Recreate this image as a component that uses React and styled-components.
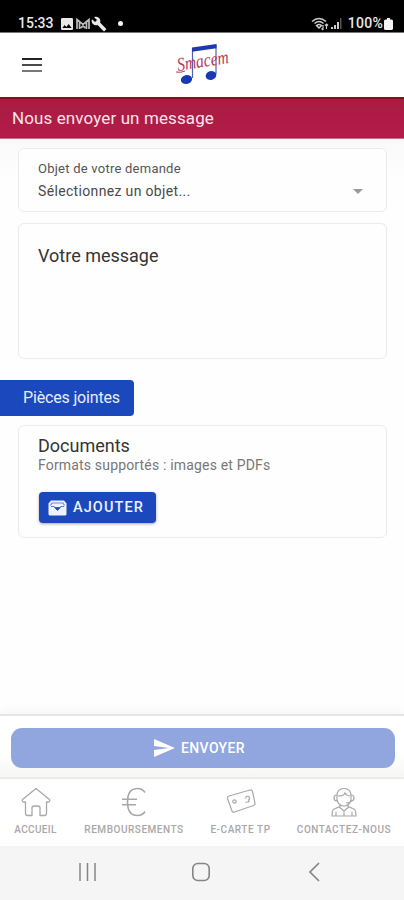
import React from 'react';
import styled, {createGlobalStyle} from 'styled-components';
import {MdImage, MdBuild, MdSend, MdArrowDropDown} from 'react-icons/md';

const GlobalStyle = createGlobalStyle`
  * {
    box-sizing: border-box;
  }
  body {
    margin: 0;
    background: #fff;
    font-family: Roboto, 'Liberation Sans', sans-serif;
  }
`;

const Screen = styled.div`
  width: 404px;
  height: 900px;
  display: flex;
  flex-direction: column;
  overflow: hidden;
  background: #fefefe;
`;

const StatusBar = styled.div`
  height: 33px;
  flex: none;
  display: flex;
  justify-content: space-between;
  padding: 15px 11px 0 18px;
  background: #000;
  border-bottom: 1px solid #777;
  color: #e8e8e8;
`;

const StatusGroup = styled.div`
  height: 17px;
  display: flex;
  align-items: center;
  svg {
    flex: none;
  }
`;

const StatusText = styled.span`
  font-size: 14px;
  font-weight: 500;
  line-height: 17px;
  letter-spacing: ${props => props.$spacing || 0}px;
  margin-left: ${props => props.$before || 0}px;
  margin-right: ${props => props.$after || 0}px;
`;

const StatusDot = styled.span`
  width: 5px;
  height: 5px;
  margin-left: 11px;
  border-radius: 50%;
  background: #f4f4f4;
`;

const Header = styled.header`
  height: 64px;
  flex: none;
  display: grid;
  grid-template-columns: 1fr 60px 1fr;
  align-items: center;
  padding: 0 22px;
  background: #fff;
`;

const MenuButton = styled.button`
  width: 20px;
  height: 14px;
  padding: 0;
  border: 0;
  background: none;
  display: flex;
  flex-direction: column;
  justify-content: space-between;
`;

const MenuLine = styled.span`
  width: 20px;
  height: 2px;
  background: ${props => props.$color};
`;

const TitleBar = styled.h1`
  height: 42px;
  flex: none;
  margin: 0;
  padding-left: 12px;
  border-top: 2px solid #85101c;
  border-bottom: 1px solid #cf6c89;
  background: linear-gradient(#a81c40, #b51b4a);
  color: #fbe3ea;
  font-size: 17px;
  font-weight: 400;
  line-height: 38px;
  letter-spacing: 0.11px;
`;

const Content = styled.main`
  flex: 1;
  padding: 9px 17px 0 18px;
  background: linear-gradient(#f9f9f9, #fefefe 40px);
`;

const Card = styled.section`
  height: ${props => props.$height}px;
  margin-bottom: ${props => props.$gap || 0}px;
  padding: ${props => props.$top}px 16px 0 19px;
  border: 1px solid #ebebeb;
  border-radius: 6px;
  background: #fefefe;
`;

const FieldLabel = styled.div`
  color: #555;
  font-size: 13px;
  line-height: 18px;
  letter-spacing: 0.24px;
`;

const SelectRow = styled.div`
  height: 26px;
  display: flex;
  align-items: center;
  justify-content: space-between;
  color: #4a4a4a;
  font-size: 14px;
  letter-spacing: 0.34px;
  svg {
    color: #999;
  }
`;

const CardTitle = styled.div`
  color: #343434;
  font-size: 18px;
  line-height: 21px;
`;

const Hint = styled.div`
  color: #777;
  font-size: 14px;
  line-height: 18px;
  letter-spacing: 0.17px;
`;

const SectionTag = styled.h2`
  width: 134px;
  height: 36px;
  margin: 0 0 9px -18px;
  padding-left: 23px;
  border-radius: 0 4px 4px 0;
  background: #1b49bd;
  color: #e8edfb;
  font-size: 16px;
  font-weight: 400;
  line-height: 36px;
  letter-spacing: -0.16px;
`;

const AddButton = styled.button`
  width: 117px;
  height: 31px;
  margin: 18px 0 0 1px;
  padding: 0 0 0 9px;
  display: flex;
  align-items: center;
  gap: 6px;
  border: 0;
  border-radius: 4px;
  background: #1b49bd;
  box-shadow: 0 1px 3px rgba(0, 0, 0, 0.35);
  color: #eef2fd;
  font-family: inherit;
  font-size: 14.5px;
  font-weight: 500;
  letter-spacing: 1.1px;
`;

const ActionBar = styled.div`
  height: 65px;
  flex: none;
  padding: 12px 9px 0 11px;
  border-top: 2px solid #e4e5e5;
  border-bottom: 2px solid #ececec;
  background: linear-gradient(#fff 60%, #f6f6f4);
  box-shadow: 0 -3px 10px rgba(0, 0, 0, 0.04);
`;

const SendButton = styled.button`
  width: 100%;
  height: 40px;
  padding: 0 9px 0 0;
  display: flex;
  align-items: center;
  justify-content: center;
  gap: 5px;
  border: 0;
  border-radius: 11px;
  background: #91a5df;
  color: #fff;
  font-family: inherit;
  font-size: 14px;
  font-weight: 500;
  letter-spacing: 0.35px;
`;

const TabBar = styled.nav`
  height: 67px;
  flex: none;
  display: flex;
  background: #fff;
`;

const Tab = styled.a`
  width: ${props => props.$width}px;
  flex: none;
  padding-top: 8px;
  display: flex;
  flex-direction: column;
  align-items: center;
  color: #a8a8a8;
  svg {
    display: block;
  }
`;

const TabLabel = styled.span`
  margin-top: 7px;
  font-size: 10px;
  font-weight: 500;
  line-height: 12px;
  white-space: nowrap;
  letter-spacing: ${props => props.$spacing}px;
`;

const SystemNav = styled.div`
  height: 54px;
  flex: none;
  display: grid;
  grid-template-columns: 114px 118px 12px;
  align-items: center;
  padding: 0 0 2px 77px;
  background: #f5f5f5;
`;

const GmailIcon = () => (
  <svg width="16" height="12" viewBox="0 0 15 12" fill="none" stroke="#bbb" strokeWidth="1.7">
    <path d="M1.5 11V1.5l6 5 6-5V11M4 11V4M11 11V4M5 10l2.5-2L10 10" />
  </svg>
);

const WifiIcon = () => (
  <svg width="18" height="14" viewBox="0 0 18 14" fill="none" stroke="#ccc" strokeWidth="1.5">
    <path d="M1 4.5Q8 -1.5 15 4.5M3.5 6.5Q8 2.5 12.5 6.5M5.5 8.5Q8 6.5 10.5 8.5L8 11z" />
    <path d="M12 8v5M10.5 11.5 12 13M15.5 12V7M14 8.5 15.5 7 17 8.5" strokeWidth="1.2" />
  </svg>
);

const SignalIcon = () => (
  <svg width="14" height="11" viewBox="-2 0 14 11">
    <path d="M0 11V9h2v2zM3 11V7h2v4zM6 11V4h2v7z" fill="#ccc" />
    <path d="M9 11V0h1.5v11z" fill="#555" />
  </svg>
);

const BatteryIcon = () => (
  <svg width="9" height="12" viewBox="0 0 9 12" fill="#f4f4f4">
    <path d="M3 0h3v1.5h1.5Q9 1.5 9 3v7.5Q9 12 7.5 12h-6Q0 12 0 10.5V3Q0 1.5 1.5 1.5H3z" />
  </svg>
);

const Logo = () => (
  <svg width="60" height="48" viewBox="0 0 60 48" overflow="visible">
    <path d="M20.5 37V7M44 33V4" stroke="#5361b6" strokeWidth="1.2" />
    <path d="M20 6.5 44.5 3v4.2L20 10.7z" fill="#1c39b0" />
    <text
      x="6"
      y="30"
      transform="rotate(-9 6 30)"
      textLength="52"
      lengthAdjust="spacingAndGlyphs"
      fontFamily="Liberation Serif, serif"
      fontStyle="italic"
      fontSize="19"
      fill="#b43a5b"
    >
      Smacem
    </text>
    <path d="M4 31q5 1 9-1" stroke="#b43a5b" fill="none" />
    <ellipse cx="14.5" cy="38.5" rx="5.7" ry="4.5" transform="rotate(-15 14.5 38.5)" fill="#1838b4" />
    <ellipse cx="39" cy="34.5" rx="5.4" ry="4.3" transform="rotate(-15 39 34.5)" fill="#1838b4" />
  </svg>
);

const InboxIcon = () => (
  <svg width="19" height="16" viewBox="0 0 19 16">
    <path
      d="M3 .5h13l2.5 3v10.500q0 1.500-1.500 1.500H2Q.5 15.500.5 14V3.500z"
      fill="#eef2fd"
    />
    <path d="M2.500 5.500 4 3h11l1.500 2.500" fill="none" stroke="#6d8bd8" strokeWidth="1.2" />
    <path d="M3 6.500h3.500M12.500 6.500H16M9.500 10.500 6.500 7.500h6z" fill="#1b49bd" stroke="#1b49bd" strokeWidth=".7" />
  </svg>
);

const HomeIcon = () => (
  <svg width="30" height="30" viewBox="0 0 30 30" fill="none" stroke="currentColor" strokeWidth="1.3" strokeLinejoin="round">
    <path d="M15 1.5 1.5 12.5q-1 2 1 2.5H4.5v11q0 2.5 2 2.5H11V21q0-2 2-2h4q2 0 2 2v7.500h4.500q2 0 2-2.500V15h2q2-.5 1-2.500z" />
  </svg>
);

const EuroIcon = () => (
  <svg width="30" height="30" viewBox="0 0 30 30" fill="none" stroke="currentColor" strokeWidth="1.6">
    <path d="M26 5.5Q23.5 1.5 18.5 1.5 8.5 1.5 8.5 15T18.5 28.5q5 0 7.5-4M3 12.2h15M3 17.8h14" />
  </svg>
);

const CardIcon = () => (
  <svg width="30" height="30" viewBox="0 0 30 30" fill="none" stroke="currentColor" strokeWidth="1.2">
    <path d="M3 9 24 3q2-.5 2.5 1.500L29 16q.3 2-1.500 2.500L8.500 25Q6.500 26 6 24L1.500 11.500Q1 9.500 3 9z" />
    <circle cx="8.5" cy="14.5" r="1.7" />
    <path d="M19.5 11.5q.5-3 3-2 2 1.500 0 3.500 1.500 1-.5 2l-2.500.5" />
  </svg>
);

const AgentIcon = () => (
  <svg width="30" height="30" viewBox="0 0 30 30" fill="none" stroke="currentColor" strokeWidth="1.2">
    <path d="M8 9Q8 1.500 15 1.500T22 9M8 8q-3 0-3 3t3 3M22 8q3 0 3 3t-3 3M8 8v5q1.500 6 7 6t7-6V8M9 9q6 0 7-3 2 3 5 3M23 13q-1 3-6 3" />
    <path d="M11 17v2.500L5 22q-2 1-2 7h24q0-6-2-7l-6-2.500V17M10 20l5 4 5-4M15 24v5M7 25v4M23 25v4" />
  </svg>
);

const RecentsIcon = () => (
  <svg width="20" height="18" viewBox="0 0 20 18" stroke="#858585" strokeWidth="1.5">
    <path d="M3 0v18M10.5 0v18M18 0v18" />
  </svg>
);

const HomeKeyIcon = () => (
  <svg width="20" height="20" viewBox="0 0 20 20" fill="none" stroke="#858585" strokeWidth="1.6">
    <rect x="1.8" y="1.5" width="16.4" height="17" rx="5" />
  </svg>
);

const BackIcon = () => (
  <svg width="12" height="20" viewBox="0 0 12 20" fill="none" stroke="#858585" strokeWidth="1.6">
    <path d="M10 1 1 10 10 19" />
  </svg>
);

const tabs = [
  {label: 'ACCUEIL', width: 71, spacing: 0.35, Icon: HomeIcon},
  {label: 'REMBOURSEMENTS', width: 126, spacing: 0.53, Icon: EuroIcon},
  {label: 'E-CARTE TP', width: 87, spacing: 0.55, Icon: CardIcon},
  {label: 'CONTACTEZ-NOUS', width: 120, spacing: 0.55, Icon: AgentIcon}
];

const App = () => (
  <Screen>
    <GlobalStyle />
    <StatusBar>
      <StatusGroup>
        <StatusText $after={5}>15:33</StatusText>
        <MdImage size={16} />
        <GmailIcon />
        <MdBuild size={16} />
        <StatusDot />
      </StatusGroup>
      <StatusGroup>
        <WifiIcon />
        <SignalIcon />
        <StatusText $before={5} $after={1} $spacing={0.25}>100%</StatusText>
        <BatteryIcon />
      </StatusGroup>
    </StatusBar>
    <Header>
      <MenuButton aria-label="Menu">
        <MenuLine $color="#222" />
        <MenuLine $color="#4b4b4b" />
        <MenuLine $color="#777" />
      </MenuButton>
      <Logo />
    </Header>
    <TitleBar>Nous envoyer un message</TitleBar>
    <Content>
      <Card $height={64} $gap={11} $top={11}>
        <FieldLabel>Objet de votre demande</FieldLabel>
        <SelectRow>
          Sélectionnez un objet...
          <MdArrowDropDown size={24} />
        </SelectRow>
      </Card>
      <Card $height={136} $gap={21} $top={21}>
        <CardTitle>Votre message</CardTitle>
      </Card>
      <SectionTag>Pièces jointes</SectionTag>
      <Card $height={113} $top={9}>
        <CardTitle>Documents</CardTitle>
        <Hint>Formats supportés : images et PDFs</Hint>
        <AddButton>
          <InboxIcon />
          AJOUTER
        </AddButton>
      </Card>
    </Content>
    <ActionBar>
      <SendButton>
        <MdSend size={24} />
        ENVOYER
      </SendButton>
    </ActionBar>
    <TabBar>
      {tabs.map(({label, width, spacing, Icon}) => (
        <Tab key={label} $width={width}>
          <Icon />
          <TabLabel $spacing={spacing}>{label}</TabLabel>
        </Tab>
      ))}
    </TabBar>
    <SystemNav>
      <RecentsIcon />
      <HomeKeyIcon />
      <BackIcon />
    </SystemNav>
  </Screen>
);

export default App;
